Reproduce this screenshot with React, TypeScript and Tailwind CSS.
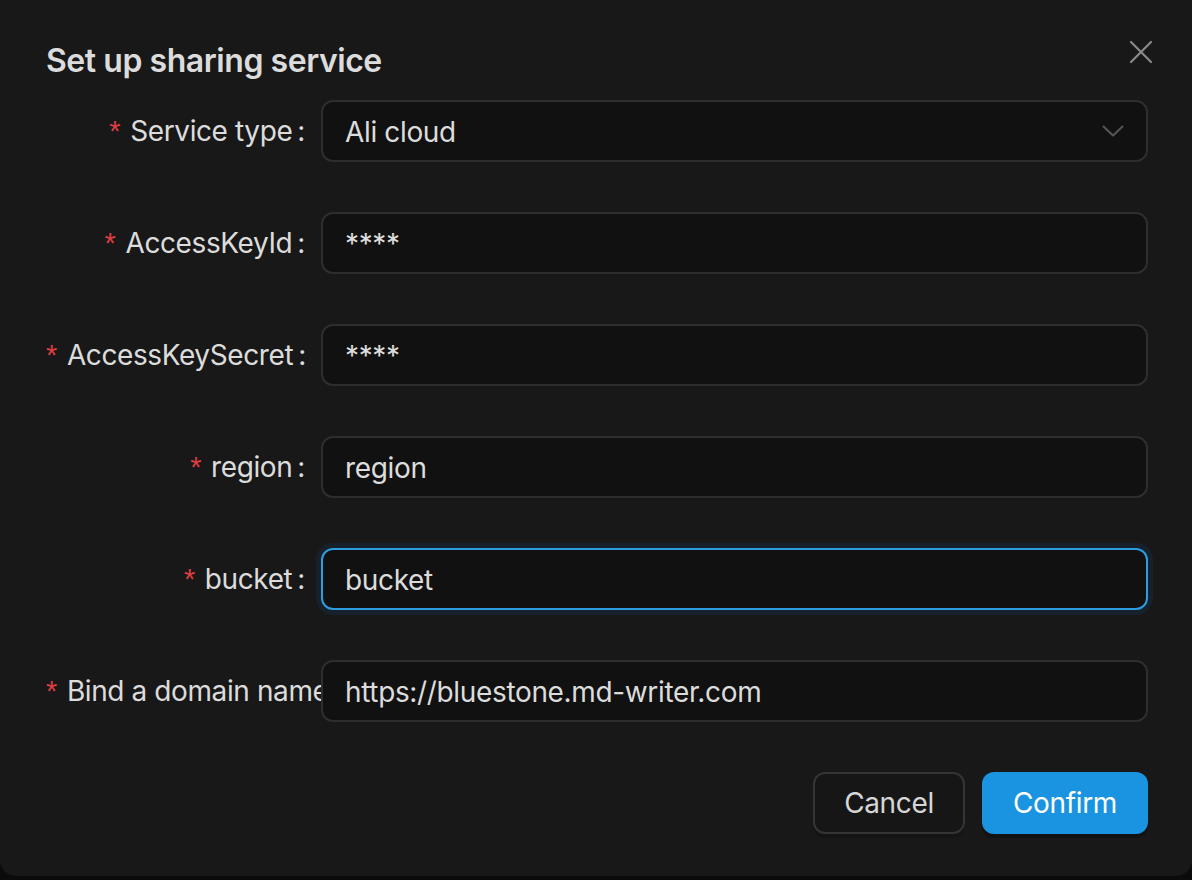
import React from 'react';

const fields = [
  { label: 'Service type', value: 'Ali cloud', select: true },
  { label: 'AccessKeyId', value: '****' },
  { label: 'AccessKeySecret', value: '****' },
  { label: 'region', value: 'region' },
  { label: 'bucket', value: 'bucket', focused: true },
  { label: 'Bind a domain name', value: 'https://bluestone.md-writer.com' },
];

function Chevron() {
  return (
    <svg width="22" height="12" viewBox="0 0 22 12" fill="none" className="shrink-0">
      <path d="M1.5 1.5 L11 10.5 L20.5 1.5" stroke="#565656" strokeWidth="2" strokeLinecap="round" strokeLinejoin="round" />
    </svg>
  );
}

function CloseIcon() {
  return (
    <svg width="24" height="24" viewBox="0 0 24 24" fill="none">
      <path d="M2 2 L22 22 M22 2 L2 22" stroke="#8a8a8a" strokeWidth="2.2" strokeLinecap="round" />
    </svg>
  );
}

function App() {
  return (
    <div className="min-h-[880px] bg-[#0b0b0b] font-['Inter','Liberation_Sans',sans-serif]">
      <div className="relative bg-[#181818] rounded-b-[16px] pt-[39px] pb-[42px] pl-[46px] pr-[44px]">
        {/* close */}
        <button className="absolute right-[39px] top-[40px] p-0">
          <CloseIcon />
        </button>

        <h2 className="text-[32px] leading-[44px] font-semibold tracking-[-0.45px] text-[#dcdcdc] mb-[17px]">
          Set up sharing service
        </h2>

        <div className="flex flex-col gap-[50px]">
          {fields.map((f) => (
            <div key={f.label} className="flex items-center">
              <div className="w-[275px] shrink-0 h-[62px] leading-[63px] text-right whitespace-nowrap overflow-hidden text-[28px] tracking-[-0.4px] text-[#dcdcdc]">
                <span className="text-[#dc3d43] mr-[10px] font-['Liberation_Sans',sans-serif] text-[29px]">*</span>
                <span>{f.label}</span>
                <span className="ml-[5px] mr-[16px]">:</span>
              </div>
              <div
                className={
                  f.focused
                    ? 'flex-1 h-[62px] flex items-center justify-between rounded-[12px] bg-[#111111] border-2 border-[#2b9de0] shadow-[0_0_0_5px_#17212c] pl-[22px] pr-[22px]'
                    : 'flex-1 h-[62px] flex items-center justify-between rounded-[12px] bg-[#111111] border-2 border-[#2e2e2e] pl-[22px] pr-[22px]'
                }
              >
                <span className="text-[28px] leading-[36px] pt-[2px] tracking-[-0.35px] text-[#dcdcdc] whitespace-nowrap">{f.value}</span>
                {f.select && <Chevron />}
              </div>
            </div>
          ))}
        </div>

        <div className="flex justify-end gap-[17px] mt-[50px]">
          <button className="h-[62px] w-[152px] rounded-[12px] border-2 border-[#353535] bg-[#161616] text-[28px] tracking-[-0.35px] text-[#d6d6d6] shadow-[0_4px_0_rgba(0,0,0,0.15)]">
            Cancel
          </button>
          <button className="h-[62px] w-[166px] rounded-[12px] bg-[#1a93e1] text-[28px] tracking-[-0.35px] text-white shadow-[0_4px_0_rgba(0,0,0,0.25)]">
            Confirm
          </button>
        </div>
      </div>
    </div>
  );
}

export default App;
